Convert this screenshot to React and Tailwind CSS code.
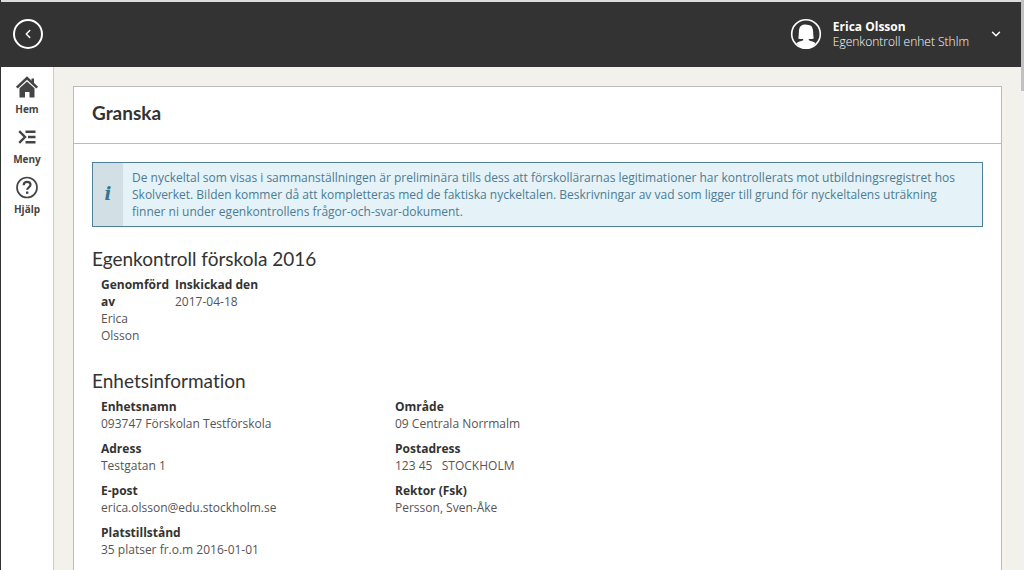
import { ChevronLeft, ChevronDown } from 'lucide-react';

const unitInfo = [
  { label: 'Enhetsnamn', value: '093747 Förskolan Testförskola' },
  { label: 'Område', value: '09 Centrala Norrmalm' },
  { label: 'Adress', value: 'Testgatan 1' },
  { label: 'Postadress', value: '123 45 \u00a0 STOCKHOLM' },
  { label: 'E-post', value: 'erica.olsson@edu.stockholm.se' },
  { label: 'Rektor (Fsk)', value: 'Persson, Sven-Åke' },
  { label: 'Platstillstånd', value: '35 platser fr.o.m 2016-01-01' },
];

function HomeIcon() {
  return (
    <svg viewBox="0 0 24 24" className="h-6 w-6" fill="none" aria-hidden="true">
      <path d="M1.800 12.600 12 3l10.200 9.600" stroke="currentColor" strokeWidth="2.600" />
      <path d="M4.500 13.200 12 6.400l7.500 6.800V22.500h-5v-5.500h-4.500v5.500H4.500z" fill="currentColor" />
      <path d="M16.500 3.500H19v5l-2.500-2.300z" fill="currentColor" />
    </svg>
  );
}

function MenuIcon() {
  return (
    <svg viewBox="0 0 24 24" className="h-6 w-6" fill="none" stroke="currentColor" aria-hidden="true">
      <path d="M4.200 6.200 10 12l-5.800 5.800" strokeWidth="2.400" />
      <path d="M10.500 6.800H20.500M13 12h7.500M10.500 17.200H20.500" strokeWidth="2.600" />
    </svg>
  );
}

function HelpIcon() {
  return (
    <svg viewBox="0 0 24 24" className="h-6 w-6" fill="none" stroke="currentColor" aria-hidden="true">
      <circle cx="12" cy="12.500" r="10" strokeWidth="1.700" />
      <path d="M8.700 10.300c0-2.200 1.400-3.500 3.400-3.500s3.400 1.200 3.400 3c0 2.500-3.300 2.500-3.300 5" strokeWidth="2.200" />
      <path d="M11 16.500h2.400v2.300H11z" fill="currentColor" stroke="none" />
    </svg>
  );
}

function Avatar() {
  return (
    <svg viewBox="0 0 32 32" className="h-8 w-8" aria-hidden="true">
      <circle cx="16" cy="16" r="14.300" fill="none" stroke="#fff" strokeWidth="1.600" />
      <path
        d="M14.500 6.400c-4.200.3-5.400 3.600-5.600 7-.1 2.700-.2 5-.6 7.200 1.600.6 3.200.6 4.900.4v1.300c-2.300 1-5.300 1.400-6.800 2.900C8.800 28.500 12 30.500 16 30.500s7.200-2 9.600-5.300c-1.500-1.500-4.500-1.900-6.800-2.900V21c1.700.2 3.300.2 4.900-.4-.4-2.200-.5-4.500-.6-7.200-.2-3.800-1.700-6.200-4.600-6.300-1.200-.6-2.600-.8-4-.7z"
        fill="#fff"
      />
    </svg>
  );
}

const navItems = [
  { label: 'Hem', Icon: HomeIcon },
  { label: 'Meny', Icon: MenuIcon },
  { label: 'Hjälp', Icon: HelpIcon },
];

function Header() {
  return (
    <header className="flex h-[65px] items-center justify-between bg-[#333] pr-[18px] pb-px pl-3 text-white">
      <button
        aria-label="Tillbaka"
        className="flex h-[30px] w-[30px] items-center justify-center rounded-full border-2 border-white"
      >
        <ChevronLeft size={14} strokeWidth={2.5} />
      </button>
      <button className="flex items-center text-left">
        <Avatar />
        <span className="ml-[11px] text-[12px] leading-[15px]">
          <span className="block font-bold">Erica Olsson</span>
          <span className="block font-light">Egenkontroll enhet Sthlm</span>
        </span>
        <ChevronDown size={14} strokeWidth={2.5} className="ml-5" />
      </button>
    </header>
  );
}

function Sidebar() {
  return (
    <nav className="w-[53px] shrink-0 border-r border-[#ccc] bg-white pt-2">
      {navItems.map(({ label, Icon }) => (
        <a key={label} href="#" className="flex h-[50px] flex-col items-center gap-[3px] text-[#444]">
          <Icon />
          <span className="text-[10px] leading-[14px] font-bold">{label}</span>
        </a>
      ))}
    </nav>
  );
}

function Field({ label, value }) {
  return (
    <div>
      <dt className="font-bold text-[#333]">{label}</dt>
      <dd>{value}</dd>
    </div>
  );
}

function Section({ title, children }) {
  return (
    <section>
      <h2 className="mb-[6px] font-['Lato',sans-serif] text-[19px] leading-[22px] text-[#333] [font-variant-ligatures:none]">
        {title}
      </h2>
      <div className="pl-[9px]">{children}</div>
    </section>
  );
}

export default function App() {
  return (
    <div className="flex h-screen overflow-hidden border-l border-[#333] bg-[#f2f1ec] font-['Open_Sans',sans-serif] text-[12px] leading-[17px] text-[#555]">
      <div className="flex min-w-0 flex-1 flex-col border-t-2 border-[#ddd]">
        <Header />
        <div className="flex flex-1">
          <Sidebar />
          <main className="flex flex-1 flex-col px-[19px] pt-[19px]">
            <div className="flex-1 border border-b-0 border-[#bbb] bg-white">
              <h1 className="border-b border-[#bbb] px-[18px] pt-[14px] pb-[18px] font-['Lato',sans-serif] text-[19px] leading-6 font-bold text-[#333]">
                Granska
              </h1>
              <div className="px-[18px] pt-[18px]">
                <div className="mb-[21px] flex border border-[#4f8097] bg-[#e5f2f8] text-[#4c7c92]">
                  <div className="flex w-[30px] shrink-0 items-center justify-center bg-[#d2dfe5] pb-[2px] font-['DejaVu_Serif',serif] text-[18px] font-bold text-[#37738c] italic">
                    i
                  </div>
                  <p className="py-[6px] pr-3 pl-[9px]">
                    De nyckeltal som visas i sammanställningen är preliminära tills dess att förskollärarnas
                    legitimationer har kontrollerats mot utbildningsregistret hos Skolverket. Bilden kommer då att
                    kompletteras med de faktiska nyckeltalen. Beskrivningar av vad som ligger till grund för
                    nyckeltalens uträkning finner ni under egenkontrollens frågor-och-svar-dokument.
                  </p>
                </div>
                <div className="flex flex-col gap-[26px]">
                  <Section title="Egenkontroll förskola 2016">
                    <dl className="grid grid-cols-[74px_1fr]">
                      <div className="w-[50px]">
                        <dt className="font-bold text-[#333]">Genomförd av</dt>
                        <dd>Erica Olsson</dd>
                      </div>
                      <Field label="Inskickad den" value="2017-04-18" />
                    </dl>
                  </Section>
                  <Section title="Enhetsinformation">
                    <dl className="grid grid-cols-[1fr_2fr] gap-y-2">
                      {unitInfo.map((item) => (
                        <Field key={item.label} {...item} />
                      ))}
                    </dl>
                  </Section>
                </div>
              </div>
            </div>
          </main>
        </div>
      </div>
      {/* scroll track */}
      <div className="w-[3px] shrink-0 bg-[#f1f1f1]">
        <div className="h-[91px] bg-[#c1c1c1]" />
      </div>
    </div>
  );
}
